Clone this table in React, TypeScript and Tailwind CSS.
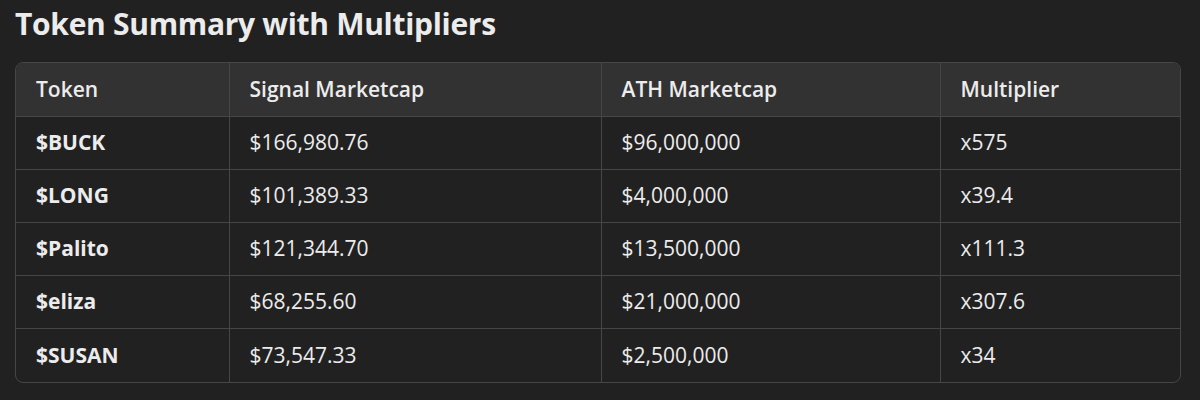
const rows = [
  { token: "$BUCK", signal: "$166,980.76", ath: "$96,000,000", mult: "x575" },
  { token: "$LONG", signal: "$101,389.33", ath: "$4,000,000", mult: "x39.4" },
  { token: "$Palito", signal: "$121,344.70", ath: "$13,500,000", mult: "x111.3" },
  { token: "$eliza", signal: "$68,255.60", ath: "$21,000,000", mult: "x307.6" },
  { token: "$SUSAN", signal: "$73,547.33", ath: "$2,500,000", mult: "x34" },
];

const App = () => {
  return (
    <div className="w-[1200px] h-[400px] bg-[#212121] text-[#ececec] px-[15px] pt-[2px] font-['Open_Sans',sans-serif]">
      <h1 className="text-[30px] font-bold leading-[44px] tracking-[-0.3px]">Token Summary with Multipliers</h1>
      <div className="mt-[16px] w-[1166px] border border-[#464646] rounded-[8px] overflow-hidden">
        <table className="w-full table-fixed border-collapse text-[21px]">
          <colgroup>
            <col className="w-[213px]" />
            <col className="w-[372px]" />
            <col className="w-[339px]" />
            <col />
          </colgroup>
          <thead>
            <tr className="bg-[#323232] h-[53px]">
              <th className="text-left font-semibold px-[20px] border-r border-[#464646]">Token</th>
              <th className="text-left font-semibold px-[20px] border-r border-[#464646]">Signal Marketcap</th>
              <th className="text-left font-semibold px-[20px] border-r border-[#464646]">ATH Marketcap</th>
              <th className="text-left font-semibold px-[20px]">Multiplier</th>
            </tr>
          </thead>
          <tbody>
            {rows.map((r) => (
              <tr key={r.token} className="h-[53.2px] border-t border-[#464646]">
                <td className="px-[20px] font-bold border-r border-[#464646]">{r.token}</td>
                <td className="px-[20px] border-r border-[#464646]">{r.signal}</td>
                <td className="px-[20px] border-r border-[#464646]">{r.ath}</td>
                <td className="px-[20px]">{r.mult}</td>
              </tr>
            ))}
          </tbody>
        </table>
      </div>
    </div>
  );
};

export default App;
